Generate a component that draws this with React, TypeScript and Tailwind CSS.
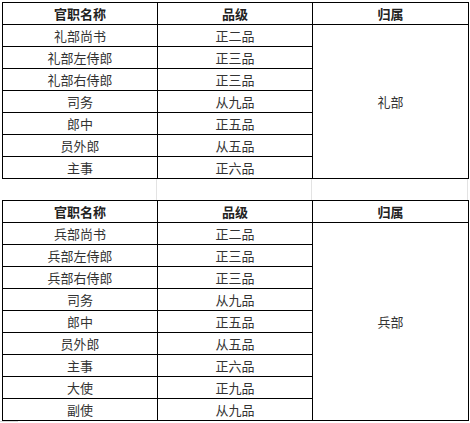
const tables = [
  {
    dept: '礼部',
    rows: [
      ['礼部尚书', '正二品'],
      ['礼部左侍郎', '正三品'],
      ['礼部右侍郎', '正三品'],
      ['司务', '从九品'],
      ['郎中', '正五品'],
      ['员外郎', '从五品'],
      ['主事', '正六品'],
    ],
  },
  {
    dept: '兵部',
    rows: [
      ['兵部尚书', '正二品'],
      ['兵部左侍郎', '正三品'],
      ['兵部右侍郎', '正三品'],
      ['司务', '从九品'],
      ['郎中', '正五品'],
      ['员外郎', '从五品'],
      ['主事', '正六品'],
      ['大使', '正九品'],
      ['副使', '从九品'],
    ],
  },
];

function RankTable({ dept, rows }: { dept: string; rows: string[][] }) {
  return (
    <div
      className="grid grid-cols-[154px_154px_155px] auto-rows-[21px] gap-px bg-black p-px w-fit"
      style={{ gridTemplateRows: `repeat(${rows.length + 1}, 21px)` }}
    >
      <div className="bg-white flex items-center justify-center font-bold text-[#222]">官职名称</div>
      <div className="bg-white flex items-center justify-center font-bold text-[#222]">品级</div>
      <div className="bg-white flex items-center justify-center font-bold text-[#222]">归属</div>
      {rows.map(([title, rank], i) => (
        <div key={i} className="contents">
          <div className="bg-white flex items-center justify-center" style={{ gridRow: i + 2, gridColumn: 1 }}>
            {title}
          </div>
          <div className="bg-white flex items-center justify-center" style={{ gridRow: i + 2, gridColumn: 2 }}>
            {rank}
          </div>
        </div>
      ))}
      <div
        className="bg-white flex items-center justify-center"
        style={{ gridColumn: 3, gridRow: `2 / span ${rows.length}` }}
      >
        {dept}
      </div>
    </div>
  );
}

export default function App() {
  return (
    <div
      className="w-[470px] h-[423px] bg-white overflow-hidden text-[13px] leading-none text-[#333]"
      style={{ fontFamily: '"Microsoft YaHei", "Noto Sans CJK SC", sans-serif' }}
    >
      <div className="pt-[2px] pl-[2px]">
        <RankTable {...tables[0]} />
        {/* blank spreadsheet row between the two tables */}
        <div className="flex h-[21px] -ml-[2px]">
          <div className="w-[157px] border-r border-[#e3e3e3]" />
          <div className="w-[155px] border-r border-[#e3e3e3]" />
          <div className="w-[156px] border-r border-[#e3e3e3]" />
        </div>
        <RankTable {...tables[1]} />
        <div className="-ml-[2px] w-[18px] border-t border-[#d9d9d9]" />
      </div>
    </div>
  );
}
